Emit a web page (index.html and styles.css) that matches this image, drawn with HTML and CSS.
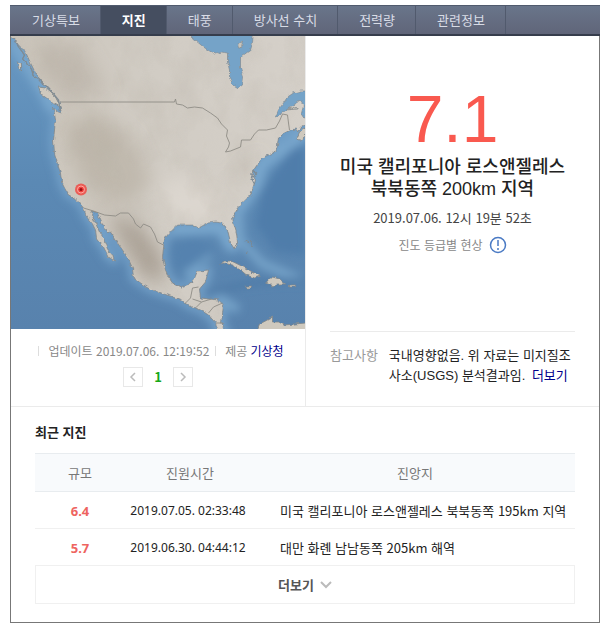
FILE: index.html
```html
<!DOCTYPE html>
<html lang="ko">
<head>
<meta charset="utf-8">
<meta name="viewport" content="width=device-width, initial-scale=1">
<title>지진</title>
<link rel="stylesheet" href="styles.css">
</head>
<body>
<main class="panel">
  <nav class="tabs">
    <a class="tab" href="#">기상특보</a>
    <a class="tab tab-active" href="#" aria-current="page">지진</a>
    <a class="tab" href="#">태풍</a>
    <a class="tab" href="#">방사선 수치</a>
    <a class="tab" href="#">전력량</a>
    <a class="tab" href="#">관련정보</a>
  </nav>

  <section class="summary">
    <div class="map-side">
      <svg class="map" viewBox="10 36 295 293" preserveAspectRatio="xMidYMid slice" aria-hidden="true">
        <defs>
          <linearGradient id="sea" x1="0" y1="0" x2="0" y2="1">
            <stop offset="0" stop-color="#6898c2"/>
            <stop offset=".5" stop-color="#5b89b4"/>
            <stop offset="1" stop-color="#5882ad"/>
          </linearGradient>
          <linearGradient id="ground" x1="0" y1="0" x2="1" y2="0">
            <stop offset="0" stop-color="#cbc5bb"/>
            <stop offset=".5" stop-color="#d1ccc4"/>
            <stop offset="1" stop-color="#d5d0c9"/>
          </linearGradient>
          <filter id="soft" x="-20%" y="-20%" width="140%" height="140%"><feGaussianBlur stdDeviation="4"/></filter>
          <filter id="wide" x="-40%" y="-40%" width="180%" height="180%"><feGaussianBlur stdDeviation="9"/></filter>
          <filter id="rough" filterUnits="userSpaceOnUse" x="0" y="26" width="315" height="313">
            <feTurbulence type="fractalNoise" baseFrequency=".22" numOctaves="2" seed="4" result="n"/>
            <feDisplacementMap in="SourceGraphic" in2="n" scale="4" xChannelSelector="R" yChannelSelector="G"/>
          </filter>
          <filter id="relief" filterUnits="userSpaceOnUse" x="10" y="36" width="295" height="293">
            <feTurbulence type="fractalNoise" baseFrequency=".035 .025" numOctaves="4" seed="9"/>
            <feColorMatrix values="0 0 0 0 .45  0 0 0 0 .41  0 0 0 0 .35  1.4 0 0 0 -.56"/>
          </filter>
          <path id="mainland" d="M4 30 L10 37 14 39 18 45 25 52 30 63 35 73 42 83 50 92 58 102 61 113 58 112 53 108 55 120 54 130 53 140 54 153 57 164 60 173 61 182 64 188 68 195 74 198 78 202 83 208 85 214 87 218 92 224 95 230 96 238 103 247 108 257 114 261 112 255 107 249 104 241 99 232 95 223 91 214 92 211 97 213 100 220 103 227 112 235 117 243 127 257 132 268 133 278 143 285 152 290 160 293 173 297 181 300 187 305 200 310 208 315 215 323 217 335 226 335 221 322 223 305 218 300 209 299 200 298 199 289 205 282 208 270 197 271 192 283 180 287 172 283 168 277 165 270 162 258 163 247 164 240 167 235 177 225 185 225 193 225 198 228 207 223 215 222 222 223 227 230 229 238 230 243 234 249 237 242 236 233 233 223 232 217 237 208 243 202 250 195 253 187 255 180 251 173 258 163 263 157 275 152 277 145 278 138 284 133 290 130 295 129 298 132 300 127 310 121 310 30Z"/>
          <clipPath id="inland"><use href="#mainland"/></clipPath>
        </defs>
        <rect x="10" y="36" width="295" height="293" fill="url(#sea)"/>
        <g filter="url(#soft)" stroke-linejoin="round">
          <use href="#mainland" fill="none" stroke="#73a0c8" stroke-width="8"/>
          <path fill="none" stroke="#78a6cc" stroke-width="12" d="M12 42 L42 90 52 110 M172 230 L220 228 232 250 M238 210 L256 184 262 165 282 150 305 132"/>
          <path fill="none" stroke="#74a2c8" stroke-width="9" d="M238 210 L240 240 262 264 300 280 M186 276 L200 258 210 256 M217 297 L238 310"/>
          <path fill="#4f7daa" d="M290 150 L305 145 V255 L275 252 255 225 262 190Z"/>
          <path fill="#5482af" d="M170 245 L195 236 214 250 186 270 175 272Z"/>
          <path fill="none" stroke="#4d79a6" stroke-width="5" d="M204 297 Q240 280 305 280"/>
        </g>
        <g filter="url(#rough)" stroke="#7f8589" stroke-width=".8">
          <use href="#mainland" fill="url(#ground)"/>
          <path fill="#cfc9be" d="M38 87 L45 88 55 97 60 107 52 103 46 98 40 94Z M17 62 L21 63 21 71 18 68Z M219 264 L224 261 231 261 243 267 252 272 260 276 254 278 246 275 239 269 231 265 223 263Z M265 282 L269 280 272 277 279 279 285 284 276 284 273 288 270 284Z M289 285 H295 V287 H289Z M245 286 H251 V288 H246Z M255 334 L259 324 265 321 272 317 272 322 278 322 284 325 305 323 V334Z M296 139 L299 132 305 128 V136 L300 140Z M285 110 L294 107 297 109Z"/>
          <path fill="none" d="M245 241 L249 243 M247 250 L246 254 M250 240 L252 247"/>
        </g>
        <g clip-path="url(#inland)">
          <g filter="url(#wide)">
            <path fill="#a79d8f" opacity=".4" d="M62 125 Q92 103 130 136 L152 180 126 209 80 183Z"/>
            <path fill="#a79d8f" opacity=".3" d="M40 40 L83 48 108 91 68 102 35 63Z"/>
            <path fill="#978c7e" opacity=".65" d="M106 214 L138 224 160 251 166 280 143 279 131 257Z"/>
            <path fill="#e3dfd7" opacity=".55" d="M168 175 L221 188 216 220 173 225 157 205Z"/>
            <path fill="#a79d8f" opacity=".4" d="M215 203 L253 165 262 150 244 166Z"/>
          </g>
          <rect x="10" y="36" width="295" height="293" filter="url(#relief)" opacity=".3"/>
        </g>
        <g filter="url(#rough)" fill="#75a3c8" stroke="#7f8b93" stroke-width=".7">
          <path d="M187 30 L192 38 203 47 209 51 215 54 221 52 227 53 227 62 229 70 229 78 233 85 238 88 242 85 243 77 240 68 240 57 250 50 252 43 253 30Z"/>
          <path d="M310 91 L300 91 293 93 287 97 283 103 278 110 275 117 283 112 293 105 300 101 303 106 301 113 305 119 310 120Z"/>
          <path fill="#c9c4bb" d="M237 43 L242 42 241 47 238 47Z"/>
          <path fill="none" stroke-width="1.4" d="M14 41 L24 55 22 59 31 69 33 76 41 81 53 94 58 100 60 111 M252 170 L256 174 251 178 254 184"/>
        </g>
        <g fill="none" stroke="#8f8c86" stroke-width=".9">
          <path d="M60 102 H174 L175 99 176 104 182 105 187 108 194 107 202 108 210 113 217 118 221 124 227 130 226 136 229 143 228 147 225 152 230 151 240 147 241 140 250 140 254 134 258 130 266 130 275 128 279 121 282 114 287 115 288 123 289 130"/>
          <path d="M83 208 L93 211 104 215 115 216 120 213 128 213 133 219 135 224 140 228 143 224 150 227 154 234 157 242 163 245"/>
          <path d="M184 304 L190 298 192 288 198 287 M192 299 L201 302 196 307 M201 302 L211 299 M208 313 L213 307 222 303 M215 323 L222 323"/>
        </g>
        <circle cx="80.500" cy="189.500" r="6" fill="#ef4b45" opacity=".85"/>
        <circle cx="80.500" cy="189.500" r="3.500" fill="#f04440" stroke="#ffaaa1"/>
        <circle cx="80.500" cy="189.500" r="1.500" fill="#9d0f12"/>
      </svg>
      <div class="map-info">
        <p class="meta">
          <span class="meta-item">업데이트 2019.07.06. 12:19:52</span>
          <span class="meta-item">제공 <a href="#">기상청</a></span>
        </p>
        <div class="pager">
          <button class="page-button" type="button" aria-label="이전"><svg viewBox="0 0 18 18"><path d="M11 5 7 9l4 4"/></svg></button>
          <strong class="page-now">1</strong>
          <button class="page-button" type="button" aria-label="다음"><svg viewBox="0 0 18 18"><path d="m7 5 4 4-4 4"/></svg></button>
        </div>
      </div>
    </div>

    <div class="detail-side">
      <div class="quake">
        <strong class="magnitude">7.1</strong>
        <h1 class="place">미국 캘리포니아 로스앤젤레스<br>북북동쪽 200km 지역</h1>
        <p class="time">2019.07.06. 12시 19분 52초</p>
        <a class="guide" href="#">진도 등급별 현상
          <svg class="guide-icon" viewBox="0 0 18 18" aria-hidden="true"><circle cx="9" cy="9" r="7.500"/><path d="M9 4v6M9 12v2"/></svg>
        </a>
      </div>
      <dl class="note">
        <dt>참고사항</dt>
        <dd>국내영향없음. 위 자료는 미지질조사소(USGS) 분석결과임. <a href="#">더보기</a></dd>
      </dl>
    </div>
  </section>

  <section class="recent">
    <h2 class="recent-title">최근 지진</h2>
    <table class="recent-table">
      <colgroup><col class="col-size"><col class="col-time"><col></colgroup>
      <thead>
        <tr><th scope="col">규모</th><th scope="col">진원시간</th><th scope="col">진앙지</th></tr>
      </thead>
      <tbody>
        <tr><td class="size">6.4</td><td class="when">2019.07.05. 02:33:48</td><td class="where">미국 캘리포니아 로스앤젤레스 북북동쪽 195km 지역</td></tr>
        <tr><td class="size">5.7</td><td class="when">2019.06.30. 04:44:12</td><td class="where">대만 화롄 남남동쪽 205km 해역</td></tr>
      </tbody>
    </table>
    <button class="more" type="button">더보기 <svg viewBox="0 0 12 8" aria-hidden="true"><path d="m1 1 5 5 5-5"/></svg></button>
  </section>
</main>
</body>
</html>
```

FILE: styles.css
```css
* {
  box-sizing: border-box;
}

body {
  margin: 5px 11px 10px 10px;
  background: #fff;
  color: #222;
  font: 13px/20px "Noto Sans CJK KR", sans-serif;
}

h1, h2, p, dl, dd {
  margin: 0;
}

a {
  color: #00008b;
  text-decoration: none;
}

button {
  padding: 0;
  border: 1px solid #e8e8e8;
  background: #fff;
  font: inherit;
}

.panel {
  border: 1px solid #777;
  border-top: 0;
}

.tabs {
  display: flex;
  height: 31px;
  margin: 0 -1px;
  padding-left: 1px;
  border-top: 1px solid #505a6d;
  border-bottom: 2px solid #363d4c;
  background: linear-gradient(#69758a, #606579);
}

.tab {
  padding: 0 20px 0 21px;
  border-right: 1px solid #515a6d;
  color: #d8dce6;
  line-height: 28px;
  white-space: nowrap;
}

.tab-active {
  background: #454e60;
  color: #fff;
  font-weight: 700;
}

.summary {
  display: grid;
  grid-template-columns: 295fr 293fr;
  border-bottom: 1px solid #ebebeb;
}

.map-side {
  border-right: 1px solid #ebebeb;
}

.map {
  display: block;
  width: 100%;
  aspect-ratio: 294 / 293;
}

.map-info {
  padding: 12px 20px 19px;
}

.meta {
  display: flex;
  justify-content: center;
  color: #888;
  font-size: 12px;
  white-space: nowrap;
}

.meta-item {
  display: flex;
  align-items: center;
  gap: 3px;
}

.meta-item::before {
  content: "";
  width: 1px;
  height: 10px;
  margin: 0 6px;
  background: #ddd;
}

.pager {
  display: flex;
  justify-content: center;
  align-items: center;
  margin-top: 6px;
}

.page-button {
  width: 20px;
  height: 20px;
}

.page-button svg {
  display: block;
  fill: none;
  stroke: #bbb;
  stroke-width: 1.5;
}

.page-now {
  width: 30px;
  color: #16a818;
  text-align: center;
}

.detail-side {
  display: flex;
  flex-direction: column;
  justify-content: space-between;
  padding: 50px 24px 20px;
}

.quake {
  display: flex;
  flex-direction: column;
  align-items: center;
  text-align: center;
}

.magnitude {
  color: #f9594f;
  font: 66px/66px "Liberation Sans", sans-serif;
}

.place {
  margin-top: 4px;
  font-family: "Liberation Sans", "Noto Sans CJK KR", sans-serif;
  font-size: 18px;
  font-weight: 500;
  line-height: 22px;
  white-space: nowrap;
}

.time {
  margin-top: 8px;
  color: #444;
}

.guide {
  display: flex;
  align-items: center;
  gap: 6px;
  margin-top: 7px;
  color: #888;
  font-size: 12px;
}

.guide-icon {
  width: 18px;
  height: 18px;
  fill: none;
  stroke: #4a7ac4;
  stroke-width: 1.5;
}

.note {
  display: flex;
  gap: 11px;
  padding-top: 14px;
  border-top: 1px solid #ebebeb;
  font-family: "Liberation Sans", "Noto Sans CJK KR", sans-serif;
}

.note dt {
  flex: none;
  color: #999;
}

.note dd {
  word-break: break-all;
}

.note a {
  margin-left: 3px;
}

.recent {
  padding: 15px 24px 18px;
}

.recent-title {
  font-size: 13px;
  line-height: 20px;
}

.recent-table {
  width: 100%;
  margin-top: 11px;
  border-collapse: collapse;
  table-layout: fixed;
}

.col-size {
  width: 90px;
}

.col-time {
  width: 130px;
}

.recent-table th {
  height: 38px;
  padding: 0;
  border-top: 1px solid #e8ecef;
  border-bottom: 1px solid #e8ecef;
  background: #f8fafc;
  color: #777;
  font-weight: 400;
}

.recent-table td {
  height: 37px;
  padding: 2px 0 0;
  border-bottom: 1px solid #f0f0f0;
}

.recent-table .size {
  color: #ee6460;
  font-family: "Noto Sans", sans-serif;
  font-weight: 700;
  text-align: center;
}

.recent-table .when {
  padding-right: 4px;
  font-family: "Noto Sans", sans-serif;
  font-size: 12px;
  text-align: center;
}

.recent-table .where {
  padding-left: 25px;
}

.more {
  display: flex;
  justify-content: center;
  align-items: center;
  gap: 6px;
  width: 100%;
  height: 38px;
  border-color: #f0f0f0;
  border-top: 0;
  color: #555;
  font-weight: 700;
}

.more svg {
  width: 12px;
  height: 8px;
  fill: none;
  stroke: #bbb;
  stroke-width: 2;
}
```
